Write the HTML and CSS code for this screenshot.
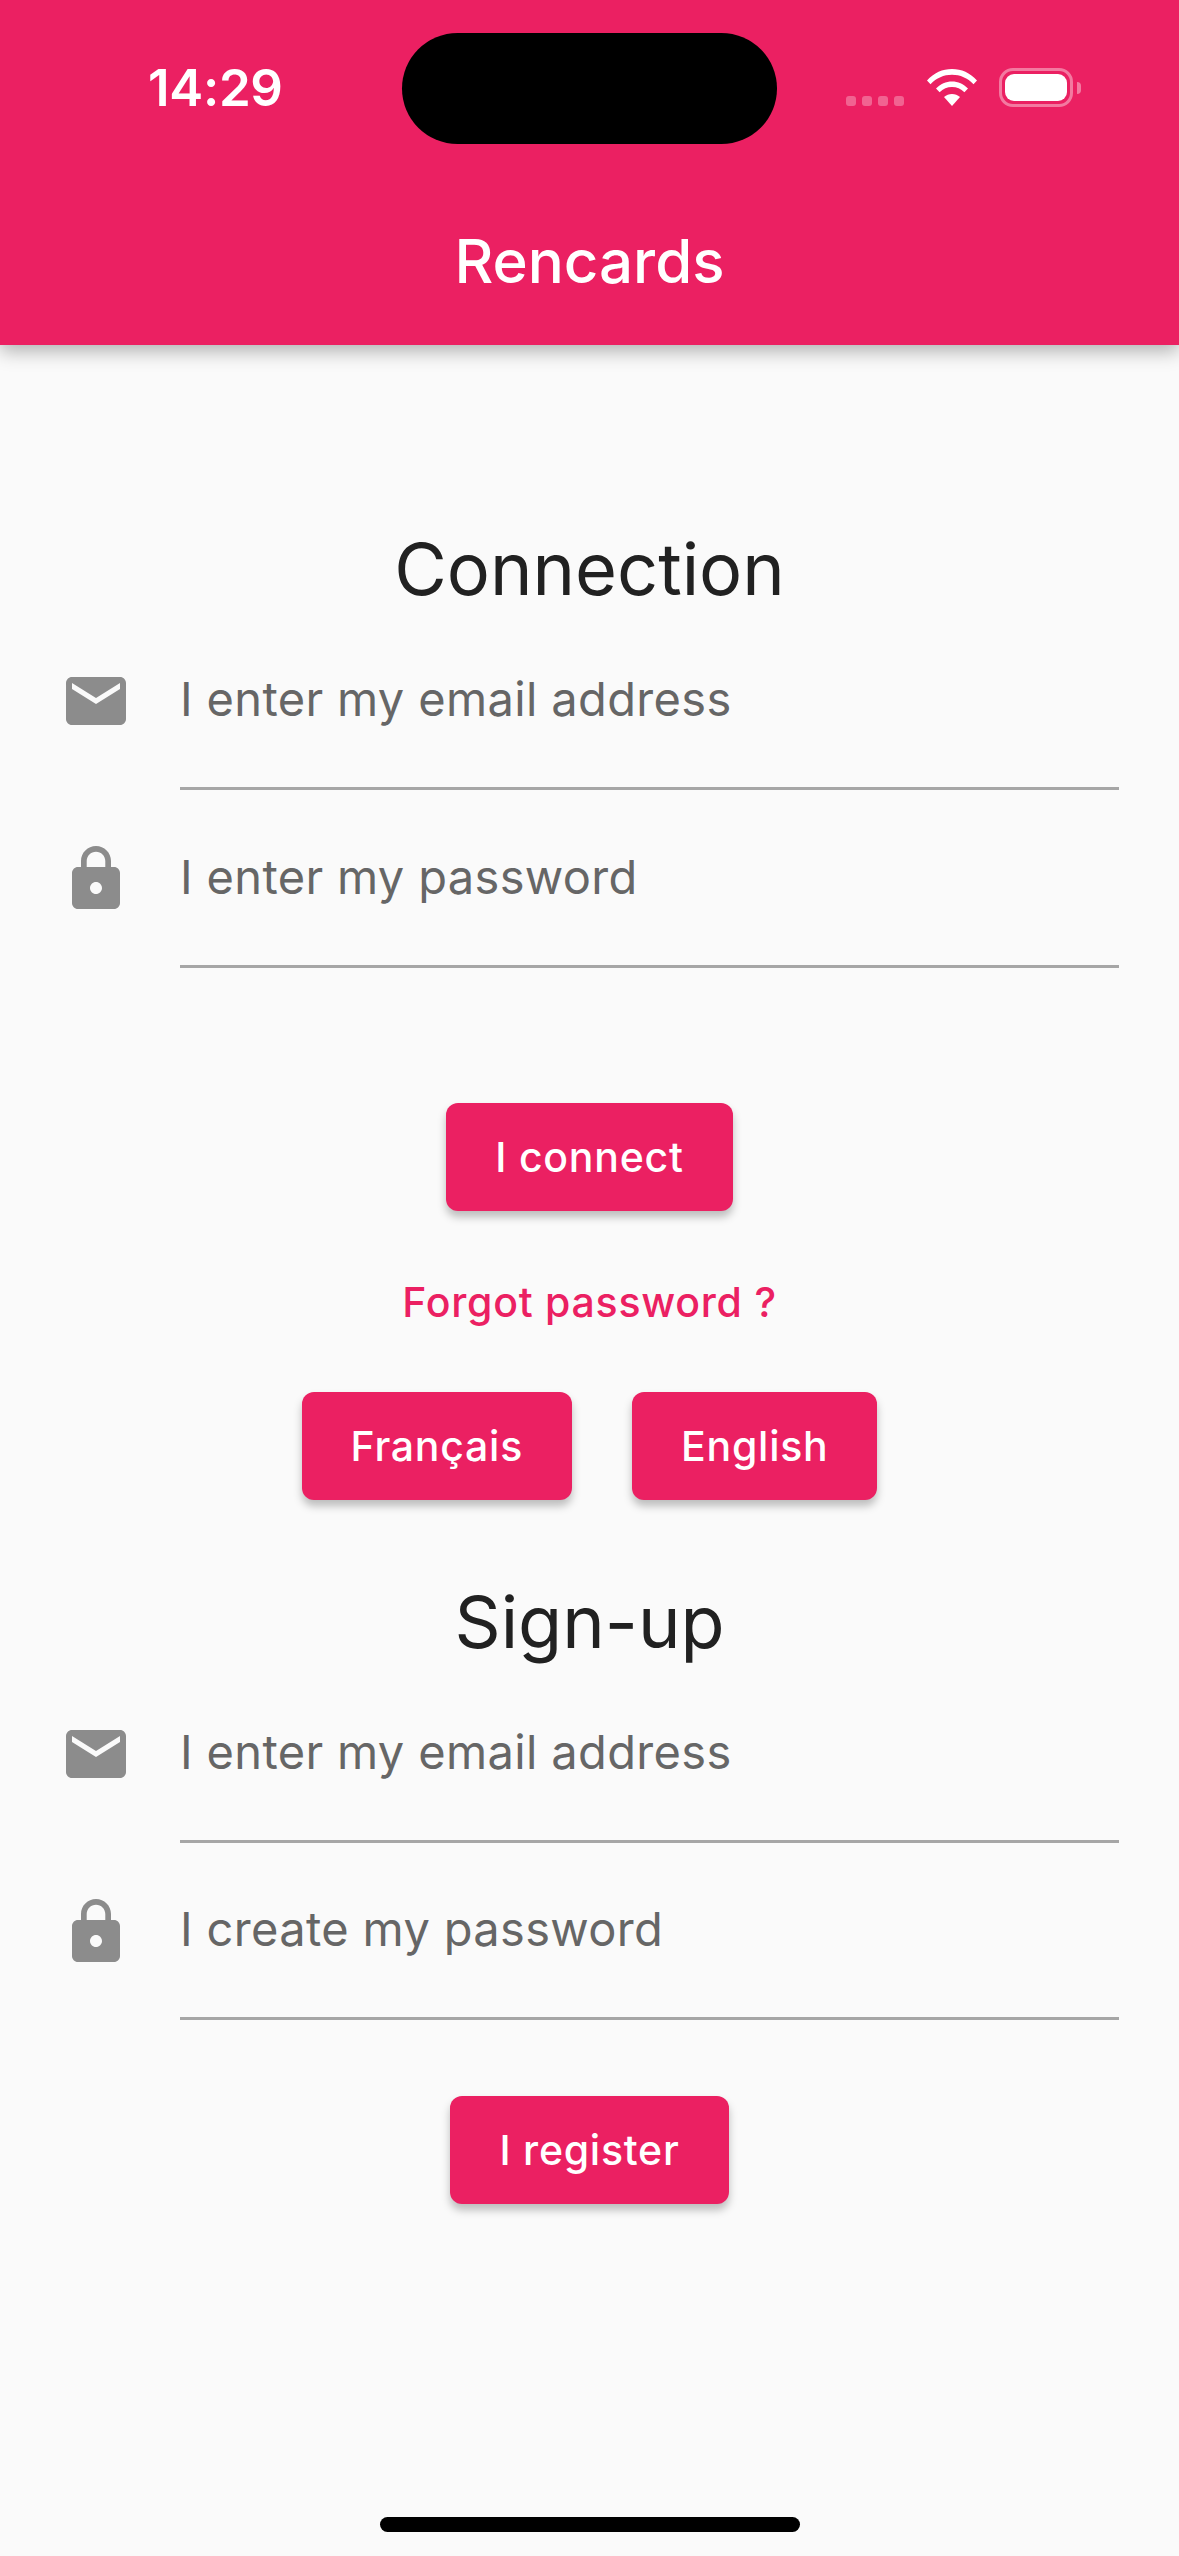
FILE: index.html
```html
<!DOCTYPE html>
<html lang="en">
<head>
<meta charset="utf-8">
<title>Rencards</title>
<link rel="stylesheet" href="styles.css">
</head>
<body>
<svg class="defs" width="0" height="0" aria-hidden="true">
  <symbol id="mail" viewBox="0 0 24 24"><path d="M20 4H4c-1.1 0-1.99.9-1.99 2L2 18c0 1.1.9 2 2 2h16c1.1 0 2-.9 2-2V6c0-1.1-.9-2-2-2zm0 4l-8 5-8-5V6l8 5 8-5v2z"/></symbol>
  <symbol id="lock" viewBox="0 0 24 24"><path d="M18 8h-1V6c0-2.76-2.24-5-5-5S7 3.24 7 6v2H6c-1.1 0-2 .9-2 2v10c0 1.1.9 2 2 2h12c1.1 0 2-.9 2-2V10c0-1.1-.9-2-2-2zm-6 9c-1.1 0-2-.9-2-2s.9-2 2-2 2 .9 2 2-.9 2-2 2zm3.1-9H8.9V6c0-1.71 1.39-3.1 3.1-3.1 1.71 0 3.1 1.39 3.1 3.1v2z"/></symbol>
</svg>
<div class="screen">
  <header class="appbar">
    <div class="status">
      <span class="time">14:29</span>
      <div class="status-right">
        <div class="dots"><i></i><i></i><i></i><i></i></div>
        <svg class="wifi" viewBox="0 0 50 37" width="50" height="37"><path d="M25 0C34.500 0 43 3.800 50 11.500L46.500 15.200C40.500 8.900 33.200 5.700 25 5.700S9.500 8.900 3.500 15.200L0 11.500C7 3.800 15.500 0 25 0Z"/><path d="M25 12.500C31 12.500 36.500 14.900 41 19.500L37.400 23.300C33.900 19.800 29.700 18 25 18S16.100 19.800 12.600 23.300L9 19.500C13.500 14.900 19 12.500 25 12.500Z"/><path d="M25 25C28 25 30.600 26 33 28.100L25 37L17 28.100C19.400 26 22 25 25 25Z"/></svg>
        <div class="battery"><div class="battery-fill"></div></div>
        <div class="battery-cap"></div>
      </div>
    </div>
    <div class="notch"></div>
    <h1 class="title">Rencards</h1>
  </header>
  <main class="content">
    <section class="login">
      <h2 class="heading">Connection</h2>
      <div class="field"><svg class="icon"><use href="#mail"/></svg><div class="input">I enter my email address</div></div>
      <div class="field"><svg class="icon"><use href="#lock"/></svg><div class="input">I enter my password</div></div>
      <div class="actions login-action"><button class="btn">I connect</button></div>
      <a class="forgot">Forgot password ?</a>
      <div class="actions langs"><button class="btn">Français</button><button class="btn">English</button></div>
    </section>
    <section class="signup">
      <h2 class="heading">Sign-up</h2>
      <div class="field"><svg class="icon"><use href="#mail"/></svg><div class="input">I enter my email address</div></div>
      <div class="field"><svg class="icon"><use href="#lock"/></svg><div class="input">I create my password</div></div>
      <div class="actions register"><button class="btn">I register</button></div>
    </section>
  </main>
  <div class="home"></div>
</div>
</body>
</html>
```
FILE: styles.css
```css
* { box-sizing: border-box; }
html, body { margin: 0; padding: 0; }
body { width: 1179px; height: 2556px; overflow: hidden; background: #fafafa; font-family: Inter, "Liberation Sans", sans-serif; }
.defs { position: absolute; }
.screen { position: relative; width: 1179px; height: 2556px; display: flex; flex-direction: column; background: #fafafa; }

.appbar { position: relative; height: 345px; background: #eb2062; box-shadow: 0 6px 18px rgba(0,0,0,.3); z-index: 1; display: flex; flex-direction: column; }
.status { height: 227px; display: flex; justify-content: space-between; padding: 60px 98px 0 148px; }
.time { font-size: 51px; font-weight: 600; line-height: 56px; color: #fff; height: 56px; letter-spacing: -0.3px; }
.status-right { display: flex; align-items: flex-start; padding-top: 8px; }
.dots { display: flex; gap: 6px; margin: 28px 23px 0 0; }
.dots i { display: block; width: 10px; height: 10px; border-radius: 3px; background: rgba(255,255,255,.3); }
.wifi { fill: #fff; margin: 1px 22px 0 0; }
.battery { width: 74px; height: 39px; border: 3px solid rgba(255,255,255,.4); border-radius: 14px; padding: 3px; }
.battery-fill { width: 100%; height: 100%; background: #fff; border-radius: 9px; }
.battery-cap { width: 4px; height: 12px; margin: 14px 0 0 4px; background: rgba(255,255,255,.4); border-radius: 0 6px 6px 0; }
.notch { position: absolute; left: 402px; top: 33px; width: 375px; height: 111px; border-radius: 56px; background: #000; }
.title { margin: 0; text-align: center; font-size: 60px; font-weight: 450; line-height: 68px; color: #fff; }

.content { flex: 1; padding: 0 60px; display: flex; flex-direction: column; }
.heading { margin: 0; text-align: center; font-size: 72px; font-weight: 380; line-height: 86px; color: #212121; }
.login { padding-top: 181px; }
.signup { padding-top: 79px; }
.field { height: 178px; display: flex; align-items: flex-start; }
.icon { width: 72px; height: 72px; fill: #8c8c8c; flex: none; margin: 53px 48px 0 0; }
.input { flex: 1; height: 178px; padding-top: 58px; border-bottom: 3px solid #a6a6a6; font-size: 47px; font-weight: 380; line-height: 58px; letter-spacing: 0.35px; color: #666; }
.signup .field + .field { height: 177px; }
.signup .field + .field .input { height: 177px; padding-top: 57px; }
.actions { display: flex; justify-content: center; }
.login-action { padding-top: 135px; }
.langs { gap: 60px; }
.register { padding-top: 76px; }
.btn { border: 0; height: 108px; padding: 0 49px; background: #eb2062; color: #fff; border-radius: 12px; font-family: inherit; font-size: 41px; font-weight: 450; letter-spacing: 0.75px; box-shadow: 0 6px 9px rgba(0,0,0,.25); }
.forgot { display: block; text-align: center; margin: 61px 0 60px; height: 60px; line-height: 60px; font-size: 41px; font-weight: 450; letter-spacing: 0.75px; color: #eb2062; }
.home { position: absolute; left: 380px; top: 2517px; width: 420px; height: 15px; border-radius: 8px; background: #000; }
```
